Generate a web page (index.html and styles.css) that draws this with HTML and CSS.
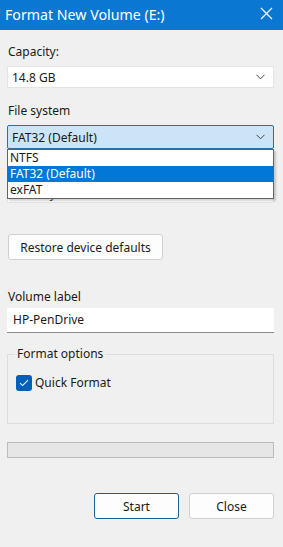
FILE: index.html
```html
<!DOCTYPE html>
<html>
<head>
<meta charset="utf-8">
<link rel="stylesheet" href="styles.css">
</head>
<body>
<div class="window">
  <div class="titlebar">
    <span class="title">Format New Volume (E:)</span>
    <svg class="close-x" width="13" height="13" viewBox="0 0 13 13"><path d="M1 1 L12 12 M12 1 L1 12" stroke="#fff" stroke-width="1.2" fill="none"/></svg>
  </div>
  <div class="content">
    <div class="label lbl-capacity">Capacity:</div>
    <div class="select sel-cap">
      <span>14.8 GB</span>
      <svg class="chev" width="9" height="6" viewBox="0 0 9 6"><path d="M0.5 0.8 L4.5 4.8 L8.5 0.8" stroke="#444" stroke-width="1" fill="none"/></svg>
    </div>
    <div class="label lbl-fs">File system</div>
    <div class="fs-wrap">
      <div class="select sel-fs">
        <span>FAT32 (Default)</span>
        <svg class="chev" width="9" height="6" viewBox="0 0 9 6"><path d="M0.5 0.8 L4.5 4.8 L8.5 0.8" stroke="#444" stroke-width="1" fill="none"/></svg>
      </div>
      <div class="dropdown">
        <div class="opt">NTFS</div>
        <div class="opt sel">FAT32 (Default)</div>
        <div class="opt">exFAT</div>
      </div>
    </div>
    <div class="spacer-alloc"></div>
    <div class="select sel-alloc"><span class="alloc-text">4096 bytes</span></div>
    <button class="btn btn-restore">Restore device defaults</button>
    <div class="label lbl-vol">Volume label</div>
    <div class="input">HP-PenDrive</div>
    <div class="group">
      <div class="legend">Format options</div>
      <div class="check-row">
        <span class="checkbox"><svg width="10" height="8" viewBox="0 0 10 8"><path d="M1 4.2 L3.6 6.6 L9 1.2" stroke="#fff" stroke-width="1.1" fill="none"/></svg></span>
        <span>Quick Format</span>
      </div>
    </div>
    <div class="progress"></div>
    <div class="actions">
      <button class="btn btn-start">Start</button>
      <button class="btn btn-close">Close</button>
    </div>
  </div>
</div>
</body>
</html>
```
FILE: styles.css
```css
* { box-sizing: border-box; }
html, body { margin: 0; padding: 0; }
body {
  background: #f0f0f0;
  font-family: "Noto Sans", "Open Sans", sans-serif;
  font-size: 12px;
  color: #1a1a1a;
  width: 283px;
  height: 547px;
  overflow: hidden;
}
.titlebar {
  height: 30px;
  background: #0a78d2;
  display: flex;
  align-items: center;
  justify-content: space-between;
  padding: 0 10px 0 5px;
  color: #fff;
}
.title { font-size: 14.2px; margin-top: -2px; }
.close-x { margin-top: -3px; }
.content {
  padding: 0 9px 0 7px;
  display: flex;
  flex-direction: column;
}
.label { height: 16px; line-height: 16px; padding-left: 1px; }
.lbl-capacity { margin-top: 14px; }
.select {
  height: 22px;
  background: #fff;
  border: 1px solid #e4e4e4;
  display: flex;
  align-items: center;
  justify-content: space-between;
  padding: 0 8px 0 4px;
}
.sel-cap { margin-top: 6px; }
.lbl-fs { margin-top: 15px; }
.fs-wrap { position: relative; margin-top: 6px; }
.sel-fs {
  height: 24px;
  background: #cce4f7;
  border: 1px solid #2a6fa8;
  border-radius: 2px;
  padding-left: 4px;
}
.dropdown {
  position: absolute;
  top: 100%;
  left: 0;
  right: 0;
  background: #fff;
  border: 1px solid #646464;
  box-shadow: 2px 2px 2px rgba(0,0,0,0.18);
  z-index: 2;
}
.opt { height: 16px; line-height: 16px; padding-left: 2px; }
.opt.sel { background: #0078d7; color: #fff; }
.spacer-alloc { height: 28px; }
.sel-alloc { margin-top: 4px; align-items: flex-end; }
.alloc-text { line-height: 14px; margin-bottom: 1px; color: #444; }
.btn {
  font-family: inherit;
  font-size: 12px;
  color: #1a1a1a;
  background: #fdfdfd;
  border: 1px solid #d0d0d0;
  border-radius: 3px;
  height: 26px;
  padding: 0;
}
.btn-restore { margin-top: 31px; margin-left: 1px; width: 155px; }
.lbl-vol { margin-top: 29px; }
.input {
  margin-top: 3px;
  height: 25px;
  background: #fff;
  border-bottom: 1px solid #8a8a8a;
  padding-left: 6px;
  line-height: 23px;
}
.group {
  margin-top: 21px;
  height: 70px;
  border: 1px solid #dcdcdc;
  position: relative;
  padding: 19px 0 0 8px;
}
.legend {
  position: absolute;
  top: -9px;
  left: 7px;
  padding: 0 2px;
  background: #f0f0f0;
  line-height: 16px;
}
.check-row { display: flex; align-items: center; gap: 3px; }
.checkbox {
  width: 16px;
  height: 16px;
  background: #005fb8;
  border-radius: 3px;
  display: flex;
  align-items: center;
  justify-content: center;
}
.progress {
  margin-top: 18px;
  height: 16px;
  background: #e6e6e6;
  border: 1px solid #bcbcbc;
}
.actions {
  margin-top: 35px;
  display: flex;
  justify-content: flex-end;
  gap: 10px;
}
.btn-start, .btn-close { width: 85px; }
.btn-start { border-color: #1d5f8f; }
```
